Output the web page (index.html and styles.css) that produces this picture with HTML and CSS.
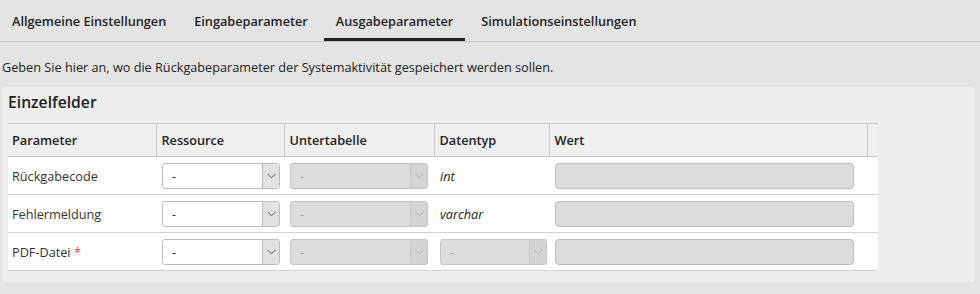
FILE: index.html
```html
<!DOCTYPE html>
<html lang="de">
<head>
<meta charset="utf-8">
<title>Ausgabeparameter</title>
<link rel="stylesheet" href="styles.css">
</head>
<body>
<nav class="tabs">
  <div class="tab">Allgemeine Einstellungen</div>
  <div class="tab">Eingabeparameter</div>
  <div class="tab active">Ausgabeparameter</div>
  <div class="tab">Simulationseinstellungen</div>
</nav>
<p class="intro">Geben Sie hier an, wo die Rückgabeparameter der Systemaktivität gespeichert werden sollen.</p>
<section class="panel">
  <h2 class="panel-title">Einzelfelder</h2>
  <table class="grid">
    <colgroup>
      <col class="c1"><col class="c2"><col class="c3"><col class="c4"><col class="c5"><col class="c6">
    </colgroup>
    <thead>
      <tr>
        <th>Parameter</th>
        <th>Ressource</th>
        <th>Untertabelle</th>
        <th>Datentyp</th>
        <th>Wert</th>
        <th></th>
      </tr>
    </thead>
    <tbody>
      <tr>
        <td>Rückgabecode</td>
        <td><div class="sel res"><span class="val">-</span><span class="btn"><svg width="9" height="6" viewBox="0 0 9 6"><polyline points="0.5,0.8 4.5,4.8 8.5,0.8" fill="none" stroke="#555" stroke-width="1"/></svg></span></div></td>
        <td><div class="sel dis sub"><span class="val">-</span><span class="btn"><svg width="9" height="6" viewBox="0 0 9 6"><polyline points="0.5,0.8 4.5,4.8 8.5,0.8" fill="none" stroke="#b0b0b0" stroke-width="1"/></svg></span></div></td>
        <td><i class="type">int</i></td>
        <td><div class="inp"></div></td>
        <td></td>
      </tr>
      <tr>
        <td>Fehlermeldung</td>
        <td><div class="sel res"><span class="val">-</span><span class="btn"><svg width="9" height="6" viewBox="0 0 9 6"><polyline points="0.5,0.8 4.5,4.8 8.5,0.8" fill="none" stroke="#555" stroke-width="1"/></svg></span></div></td>
        <td><div class="sel dis sub"><span class="val">-</span><span class="btn"><svg width="9" height="6" viewBox="0 0 9 6"><polyline points="0.5,0.8 4.5,4.8 8.5,0.8" fill="none" stroke="#b0b0b0" stroke-width="1"/></svg></span></div></td>
        <td><i class="type">varchar</i></td>
        <td><div class="inp"></div></td>
        <td></td>
      </tr>
      <tr>
        <td>PDF-Datei <span class="req">*</span></td>
        <td><div class="sel res"><span class="val">-</span><span class="btn"><svg width="9" height="6" viewBox="0 0 9 6"><polyline points="0.5,0.8 4.5,4.8 8.5,0.8" fill="none" stroke="#555" stroke-width="1"/></svg></span></div></td>
        <td><div class="sel dis sub"><span class="val">-</span><span class="btn"><svg width="9" height="6" viewBox="0 0 9 6"><polyline points="0.5,0.8 4.5,4.8 8.5,0.8" fill="none" stroke="#b0b0b0" stroke-width="1"/></svg></span></div></td>
        <td><div class="sel dis dt"><span class="val">-</span><span class="btn"><svg width="9" height="6" viewBox="0 0 9 6"><polyline points="0.5,0.8 4.5,4.8 8.5,0.8" fill="none" stroke="#b0b0b0" stroke-width="1"/></svg></span></div></td>
        <td><div class="inp"></div></td>
        <td></td>
      </tr>
    </tbody>
  </table>
</section>
</body>
</html>
```

FILE: styles.css
```css
* { box-sizing: border-box; }

html, body {
  margin: 0;
  padding: 0;
  background: #e4e4e4;
  font-family: "Open Sans", "Liberation Sans", sans-serif;
  font-size: 12.7px;
  color: #222;
}

.tabs {
  display: flex;
  gap: 4px;
  height: 42px;
  border-bottom: 1px solid #c6c6c6;
}

.tab {
  padding: 4px 12px 0;
  line-height: 34px;
  height: 41px;
  font-weight: 600;
  color: #222;
  border-bottom: 3px solid transparent;
  white-space: nowrap;
}

.tab.active {
  border-bottom-color: #222;
}

.intro {
  margin: 16px 0 0;
  padding: 0 2px;
  line-height: 18px;
  color: #222;
}

.panel {
  margin: 11px 5px 11px 2px;
  padding: 4px 6px 11px 6px;
  background: #eeeeee;
  border-radius: 4px;
}

.panel-title {
  margin: 0 0 10px;
  font-size: 15.7px;
  font-weight: 600;
  line-height: 22px;
  color: #222;
}

.grid {
  width: 870px;
  border-collapse: collapse;
  table-layout: fixed;
}

.c1 { width: 148px; }
.c2 { width: 128px; }
.c3 { width: 150px; }
.c4 { width: 115px; }
.c5 { width: 318px; }
.c6 { width: 11px; }

.grid th {
  background: #efefef;
  border-top: 1px solid #c8c8c8;
  border-bottom: 1px solid #c8c8c8;
  border-left: 1px solid #c8c8c8;
  height: 33px;
  padding: 0 0 0 5px;
  text-align: left;
  font-weight: 600;
  color: #222;
  line-height: 18px;
}

.grid th:first-child {
  border-left: none;
  padding-left: 4px;
}

.grid td {
  background: #fff;
  border-bottom: 1px solid #d2d2d2;
  height: 38px;
  padding: 0 0 0 6px;
  color: #333;
  vertical-align: middle;
  line-height: 18px;
}

.grid td:first-child {
  padding-left: 4px;
}

.req {
  color: #e53935;
}

.type {
  font-style: italic;
  color: #222;
}

.sel {
  display: flex;
  height: 26px;
  border: 1px solid #bdbdbd;
  border-radius: 3px;
  background: #fff;
  overflow: hidden;
}

.sel .val {
  flex: 1;
  padding-left: 9px;
  line-height: 24px;
  color: #333;
}

.sel .btn {
  width: 17px;
  display: flex;
  align-items: center;
  justify-content: center;
  background: #e2e2e2;
  border-left: 1px solid #bdbdbd;
}

.sel.res { width: 118px; }
.sel.sub { width: 138px; }
.sel.dt { width: 107px; }

.sel.dis {
  background: #dcdcdc;
  border-color: #c4c4c4;
}

.sel.dis .val {
  color: #a0a0a0;
}

.sel.dis .btn {
  background: #d4d4d4;
  border-left-color: #c8c8c8;
}

.inp {
  width: 299px;
  height: 26px;
  background: #dcdcdc;
  border: 1px solid #bdbdbd;
  border-radius: 4px;
}
```
